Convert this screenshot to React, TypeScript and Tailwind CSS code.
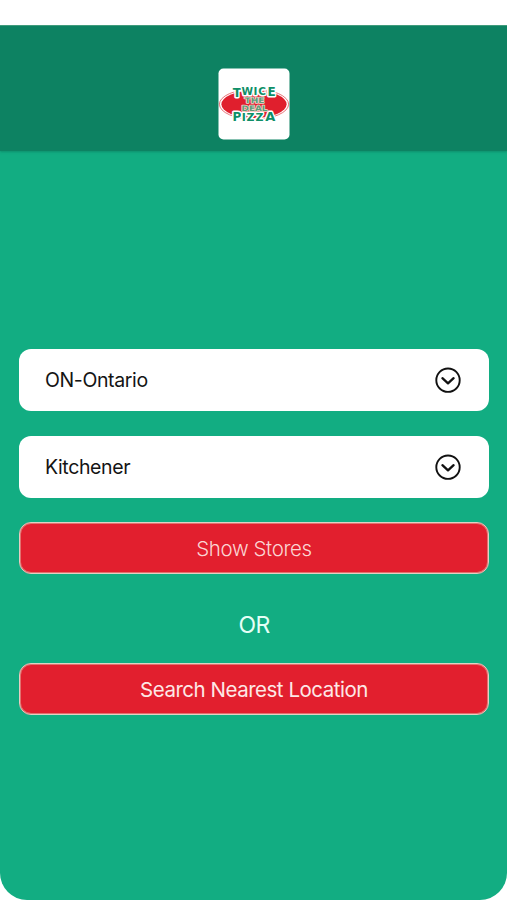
import type { ReactNode } from "react";

function Logo() {
  return (
    <svg viewBox="0 0 72 72" className="h-[72px] w-[72px]" fontFamily="'DejaVu Sans', sans-serif" fontWeight="bold">
      <rect x="0.5" y="0.5" width="71" height="71" rx="5" fill="#fff" />
      <ellipse cx="36" cy="36.2" rx="34.6" ry="15" fill="none" stroke="#e5636a" strokeWidth="0.9" />
      <ellipse cx="36" cy="36.2" rx="32.6" ry="13.8" fill="#e01f2d" />
      <g fill="#0f8f68" stroke="#fff" strokeWidth="3" paintOrder="stroke" strokeLinejoin="round">
        <text x="14.8" y="28.6" fontSize="12.5">T</text>
        <text x="23.6" y="27" fontSize="10.5">W</text>
        <text x="35.6" y="27" fontSize="10.5">I</text>
        <text x="40.2" y="27" fontSize="10.5">C</text>
        <text x="49.6" y="28.2" fontSize="12">E</text>
        <text x="14.6" y="53.2" fontSize="12">P</text>
        <text x="23.8" y="53" fontSize="11">I</text>
        <text x="28.6" y="53" fontSize="11">Z</text>
        <text x="37.6" y="53" fontSize="11">Z</text>
        <text x="47.2" y="53.2" fontSize="13">A</text>
      </g>
      <g fill="#5f9c78" stroke="#f6d5cd" strokeWidth="1.4" paintOrder="stroke" strokeLinejoin="round">
        <text x="26.5" y="35" fontSize="7.5" textLength="20" lengthAdjust="spacingAndGlyphs">THE</text>
        <text x="23.5" y="43" fontSize="7.5" textLength="26" lengthAdjust="spacingAndGlyphs">DEAL</text>
      </g>
    </svg>
  );
}

function SelectField({ value }: { value: string }) {
  return (
    <button className="flex h-[62px] w-full items-center justify-between rounded-[12px] bg-white pr-[28px] pl-[26px] text-[19.5px] tracking-[-0.38px] text-[#141414]">
      <span className="pt-[2px]">{value}</span>
      <svg viewBox="0 0 26 26" className="h-[26px] w-[26px]" fill="none" stroke="#111">
        <circle cx="13" cy="13.2" r="11.7" strokeWidth="1.9" />
        <path d="M7.4 11.2 13 16.4l5.6-5.2" strokeWidth="2.3" strokeLinecap="round" strokeLinejoin="round" />
      </svg>
    </button>
  );
}

function ActionButton({ children, className }: { children: ReactNode; className: string }) {
  return (
    <button className={`flex h-[52px] w-full items-center justify-center rounded-[12px] border border-[#e3cfc4] bg-[#e21f2e] pt-[2px] text-[20.5px] shadow-[inset_0_0_0_1px_#e2726f] ${className}`}>
      {children}
    </button>
  );
}

export default function App() {
  return (
    <div className="h-[900px] w-full bg-white pt-[25px] font-['Inter','Liberation_Sans',sans-serif]">
      <div className="flex h-[875px] flex-col overflow-hidden rounded-b-[27px] bg-[#12ad82]">
        <header className="flex h-[126px] shrink-0 justify-center border-t border-[#409b7c] bg-[#0d8262] pt-[42px] shadow-[0_1px_2px_rgba(13,130,98,0.7)]">
          <Logo />
        </header>
        <main className="flex flex-col pt-[198px] pr-[18px] pl-[19px]">
          <div className="flex flex-col gap-[24.5px]">
            <SelectField value="ON-Ontario" />
            <SelectField value="Kitchener" />
            <ActionButton className="font-[350] tracking-[-0.4px] text-[#fbd5d3]">Show Stores</ActionButton>
          </div>
          <p className="flex h-[89px] items-center justify-center pt-[13px] text-[23px] tracking-[-0.7px] text-[#e5fff6]">OR</p>
          <ActionButton className="tracking-[-0.48px] text-[#fde8e6]">Search Nearest Location</ActionButton>
        </main>
      </div>
    </div>
  );
}
